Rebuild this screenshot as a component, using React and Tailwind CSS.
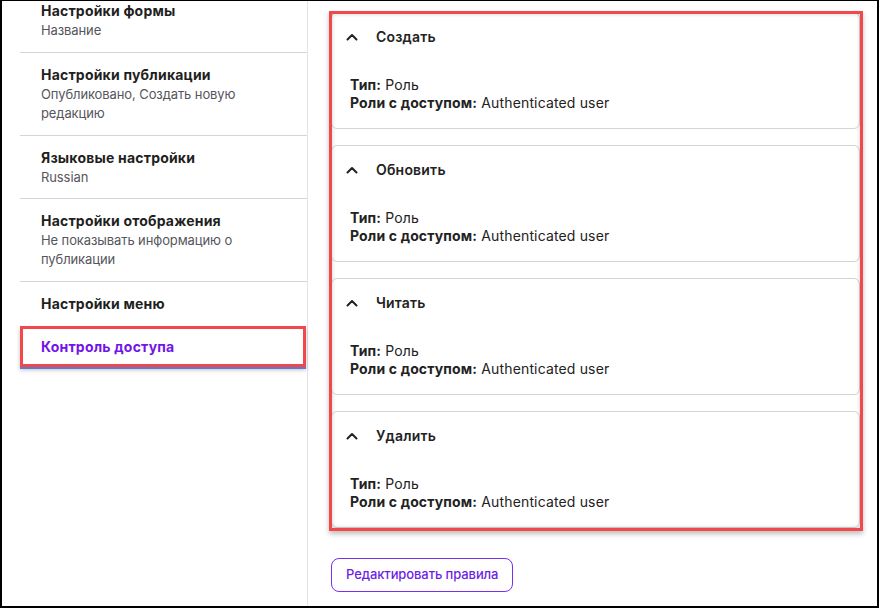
import React from 'react';

const sidebarItems = [
  { title: 'Настройки формы', sub: 'Название', pad: 'pt-0 pb-3' },
  { title: 'Настройки публикации', sub: 'Опубликовано, Создать новую редакцию', pad: 'pt-3 pb-3' },
  { title: 'Языковые настройки', sub: 'Russian', pad: 'pt-3 pb-[11px]' },
  { title: 'Настройки отображения', sub: 'Не показывать информацию о публикации', pad: 'pt-3 pb-3' },
  { title: 'Настройки меню', pad: 'pt-3 pb-3', last: true },
];

const rules = ['Создать', 'Обновить', 'Читать', 'Удалить'];

const ChevronUp = () => (
  <svg width="12" height="8" viewBox="0 0 12 8" fill="none">
    <path d="M1.5 6.5 L6 2 L10.5 6.5" stroke="#222" strokeWidth="2" strokeLinecap="round" strokeLinejoin="round" />
  </svg>
);

const RuleCard = ({ title }) => (
  <div className="h-[117px] rounded-md border border-[#d4d4d8] bg-white">
    {/* Header */}
    <div className="h-[47px] flex items-center pl-[14px]">
      <ChevronUp />
      <span className="ml-[18px] text-[14px] font-semibold text-[#222] tracking-[0.2px]">{title}</span>
    </div>
    {/* Body */}
    <div className="pl-[18px] pt-[16px] text-[14px] leading-[18px] text-[#222] tracking-[0.15px]">
      <p><span className="font-bold">Тип:</span> Роль</p>
      <p><span className="font-bold">Роли с доступом:</span> Authenticated user</p>
    </div>
  </div>
);

export default function App() {
  return (
    <div
      className="w-[879px] h-[608px] bg-white border-t border-l-2 border-r-2 border-b-2 border-black flex overflow-hidden"
      style={{ fontFamily: 'Inter, "Noto Sans", sans-serif' }}
    >
      {/* Sidebar */}
      <div className="w-[306px] shrink-0 border-r border-[#e4e4e8] pl-[18px]">
        {sidebarItems.map((item) => (
          <div
            key={item.title}
            className={`pl-[21px] pr-4 ${item.pad} ${item.last ? '' : 'border-b border-[#d4d4d9]'}`}
          >
            <div className="text-[14px] leading-[20px] font-bold text-[#1f1f22] tracking-[0.2px]">{item.title}</div>
            {item.sub && (
              <div className="text-[13px] leading-[19px] text-[#55565c] pr-[40px] tracking-[-0.1px]">{item.sub}</div>
            )}
          </div>
        ))}
        {/* Active item */}
        <div className="mr-px">
          <div className="h-[41px] flex items-center pl-[18px] border-[3px] border-[#f2474b] shadow-[0_3px_4px_rgba(0,0,0,0.25)]">
            <span className="text-[14px] font-bold text-[#7215e8] tracking-[0.2px]">Контроль доступа</span>
          </div>
          <div className="h-[2px] bg-[#5a7bd2]" />
        </div>
      </div>

      {/* Main */}
      <div className="flex-1 pl-[23px] pr-[17px] pt-[11px]">
        <div className="relative flex flex-col gap-4">
          {rules.map((r) => (
            <RuleCard key={r} title={r} />
          ))}
          <div className="absolute -left-[2px] -right-[3px] -top-[1px] -bottom-[3px] border-[3px] border-[#f2474b] shadow-[0_3px_5px_rgba(0,0,0,0.25),inset_0_0_4px_rgba(0,0,0,0.2)] pointer-events-none" />
        </div>
        <button className="mt-[30px] h-[34px] px-[14px] rounded-lg border border-[#7a2ef0] text-[13px] font-medium text-[#6d1fe6] bg-white tracking-[-0.1px]">
          Редактировать правила
        </button>
      </div>
    </div>
  );
}
